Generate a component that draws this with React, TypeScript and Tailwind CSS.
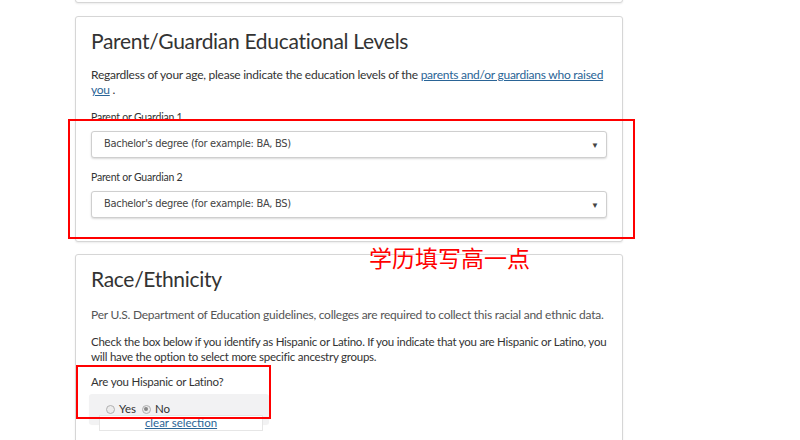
import React from "react";

const font = { fontFamily: '"Lato", "Open Sans", sans-serif' };

function Select({ value }: { value: string }) {
  return (
    <div className="flex h-[27px] w-[516px] items-center justify-between rounded-[3px] border border-[#cfcfcf] bg-white pl-[12px] pr-[7px] shadow-[0_1px_2px_rgba(0,0,0,0.15)]">
      <span className="text-[11px] tracking-[-0.3px] text-[#444]" style={{ fontFamily: '"DejaVu Sans Condensed", "DejaVu Sans", sans-serif' }}>
        {value}
      </span>
      <span className="text-[8px] text-[#444]">▼</span>
    </div>
  );
}

function Radio({ checked }: { checked?: boolean }) {
  return (
    <span className="flex h-[9px] w-[9px] items-center justify-center rounded-full border border-[#b0b0b0] bg-[#ececec]">
      {checked && <span className="h-[4px] w-[4px] rounded-full bg-[#888]" />}
    </span>
  );
}

export default function App() {
  return (
    <div className="relative h-[440px] w-[800px] overflow-hidden bg-white text-[#333]" style={font}>
      <div className="ml-[75px] flex w-[548px] flex-col">
        <div className="-mt-[17px] h-[20px] rounded-[3px] border border-[#d6d6d6] bg-white shadow-[0_1px_2px_rgba(0,0,0,0.08)]" />

        <div className="mt-[13px] rounded-[3px] border border-[#d6d6d6] bg-white pb-[23px] pl-[15px] pr-[10px] pt-[11px] shadow-[0_1px_2px_rgba(0,0,0,0.08)]">
          <h2 className="text-[21px] font-normal leading-[26px] tracking-[-0.3px] text-[#333]">Parent/Guardian Educational Levels</h2>
          <p className="mt-[13px] text-[12px] leading-[15px] tracking-[-0.25px] text-[#333]">
            Regardless of your age, please indicate the education levels of the{" "}
            <a className="text-[#2a6496] underline">parents and/or guardians who raised you</a>{" "}.
          </p>
          <div className="mt-[13px] text-[10.5px] leading-[14px] tracking-[-0.2px]">Parent or Guardian 1</div>
          <div className="mt-[7px]">
            <Select value="Bachelor's degree (for example: BA, BS)" />
          </div>
          <div className="mt-[12px] text-[10.5px] leading-[14px] tracking-[-0.2px]">Parent or Guardian 2</div>
          <div className="mt-[7px]">
            <Select value="Bachelor's degree (for example: BA, BS)" />
          </div>
        </div>

        <div className="mt-[12px] h-[300px] rounded-[3px] border border-[#d6d6d6] bg-white pl-[15px] pr-[10px] pt-[11px] shadow-[0_1px_2px_rgba(0,0,0,0.08)]">
          <h2 className="text-[21px] font-normal leading-[26px] tracking-[-0.3px] text-[#333]">Race/Ethnicity</h2>
          <p className="mt-[15px] text-[12px] leading-[15px] tracking-[-0.25px] text-[#555]">
            Per U.S. Department of Education guidelines, colleges are required to collect this racial and ethnic data.
          </p>
          <p className="mt-[12px] w-[516px] text-[11.5px] leading-[15px] tracking-[-0.25px] text-[#333]">
            Check the box below if you identify as Hispanic or Latino. If you indicate that you are Hispanic or Latino, you will have the option to select more specific ancestry groups.
          </p>
          <div className="mt-[10px] text-[11.5px] leading-[15px] tracking-[-0.2px]">Are you Hispanic or Latino?</div>
          <div className="-ml-[2px] mt-[5px] flex h-[30px] w-[180px] items-center gap-[4px] rounded-[3px] bg-[#f2f2f3] pl-[17px] text-[11.5px] shadow-[0_1px_1px_rgba(0,0,0,0.06)]">
            <Radio />
            <span className="mr-[2px]">Yes</span>
            <Radio checked />
            <span>No</span>
          </div>
          <div className="-mt-[9px] ml-[8px] flex h-[16px] w-[164px] items-center justify-center border border-[#e6e6e6] bg-white text-[11.5px]">
            <a className="text-[#2a6496] underline">clear selection</a>
          </div>
        </div>
      </div>

      <div className="absolute left-[68px] top-[119px] h-[120px] w-[567px] border-2 border-[#ff0000]" />
      <div className="absolute left-[76px] top-[365px] h-[54px] w-[195px] border-2 border-[#ff0000]" />
      <div
        className="absolute left-[369px] top-[242px] text-[23px] leading-[30px] text-[#ff0000]"
        style={{ fontFamily: '"Noto Sans CJK SC", sans-serif' }}
      >
        学历填写高一点
      </div>
    </div>
  );
}
